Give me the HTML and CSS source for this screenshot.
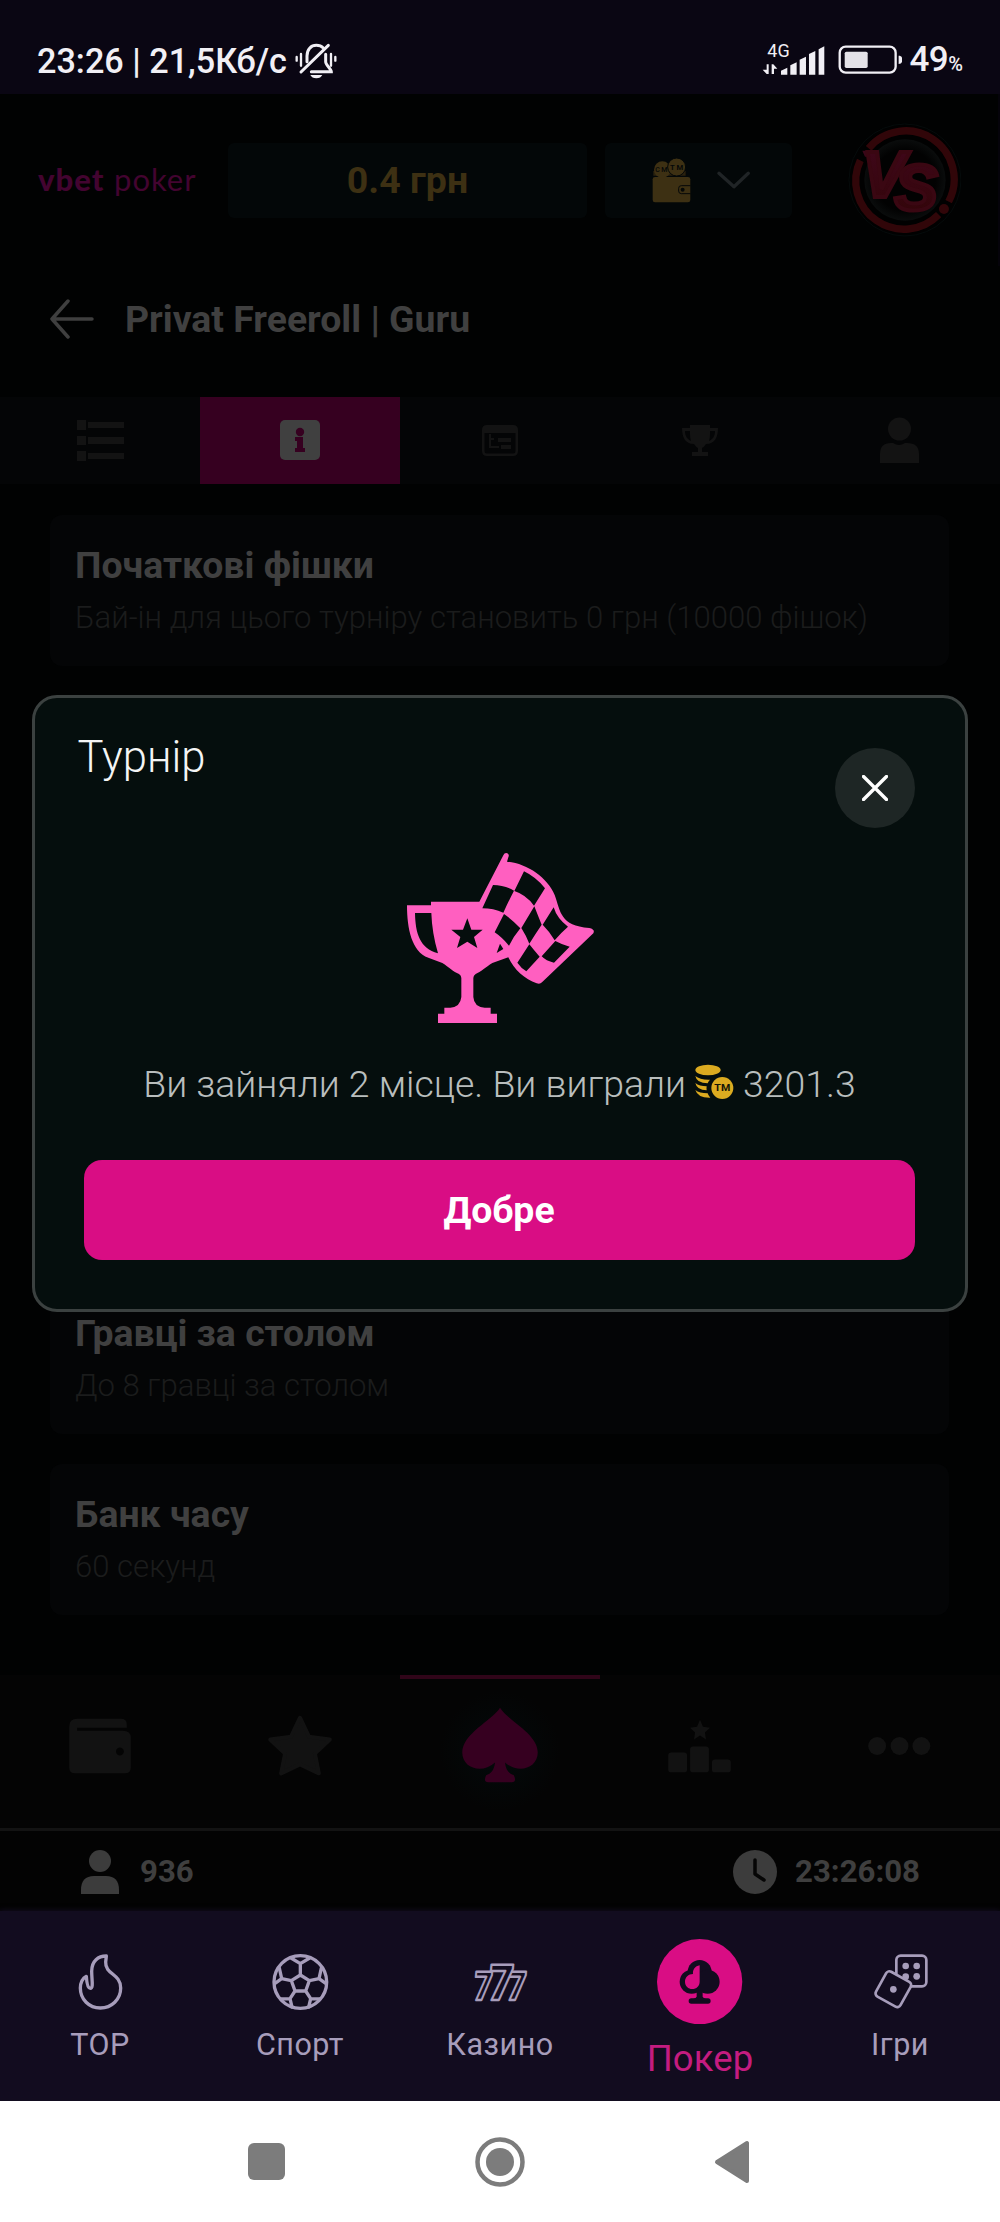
FILE: index.html
```html
<!DOCTYPE html>
<html lang="uk">
<head>
<meta charset="utf-8">
<title>vbet poker</title>
<link rel="stylesheet" href="styles.css">
</head>
<body>
<div class="screen">
  <header class="status">
    <span class="status-text">23:26 | 21,5Кб/с</span>
    <svg class="bell" viewBox="878 120 132 120" fill="none" stroke="#f1eff5" stroke-width="9" stroke-linecap="round">
      <path d="M886 168v11M899 159v35M989 159v35M1002 168v11" stroke-width="7"/>
      <path d="M917 182v-17c0-20 12-32 28-32 9 0 16 3 21 8"/>
      <path d="M973 160v22c0 10 17 22 17 30h-60"/>
      <path d="M981 133L899 213"/>
      <path d="M927 222h36c-3 6-9 10-18 10s-15-4-18-10z" fill="#f1eff5" stroke="none"/>
    </svg>
    <div class="status-right">
      <svg class="signal" viewBox="790 120 190 104" fill="#f1eff5">
        <text x="806" y="169" font-size="55" textLength="67" lengthAdjust="spacingAndGlyphs">4G</text>
        <path d="M804 190h6v29h-6l-12-13h12zM819 219v-29h5l12 13h-10v16z"/>
        <path d="M847 221v-12l19-9v21zM875 221v-28l19-9v37zM903 221v-45l19-9v54zM931 221v-62l19-9v71zM960 221v-76l17-9v85z"/>
      </svg>
      <svg class="battery" viewBox="1015 133 194 88" fill="#f1eff5">
        <rect x="1020" y="138" width="168" height="78" rx="18" fill="none" stroke="#f1eff5" stroke-width="7"/>
        <rect x="1035" y="153" width="69" height="49" rx="5" fill="#e4e2e8"/>
        <path d="M1197 165c7 0 11 3 11 12s-4 13-11 13z"/>
      </svg>
      <span class="percent">49<small>%</small></span>
    </div>
  </header>

  <div class="topbar">
    <div class="logo"><b>vbet</b><span>poker</span></div>
    <div class="balance">0.4 грн</div>
    <div class="wallet-select">
      <svg class="wallet-icon" viewBox="456 470 118 138">
        <path d="M460 526v-14h97v14z" fill="#2a210e"/>
        <circle cx="487" cy="508" r="25" fill="#3d3013"/>
        <circle cx="530" cy="500" r="27" fill="#3d3013" stroke="#030708" stroke-width="3"/>
        <text x="466" y="516" font-size="21" font-weight="500" fill="#050808" textLength="36">CM</text>
        <text x="510" y="508" font-size="23" font-weight="700" fill="#050808" textLength="40">TM</text>
        <rect x="458" y="530" width="113" height="76" rx="7" fill="#3d3013"/>
        <path d="M572 556h-28q-8 0-8 8v8q0 8 8 8h28" fill="none" stroke="#050808" stroke-width="3"/>
        <circle cx="548" cy="568" r="6" fill="#050808"/>
      </svg>
      <svg class="chevron" viewBox="650 518 100 54"><path d="M656 525l45 40 43-40" fill="none" stroke="#202426" stroke-width="10" stroke-linecap="round" stroke-linejoin="round"/></svg>
    </div>
    <svg class="avatar" viewBox="1045 370 340 340">
      <defs>
        <linearGradient id="red" x1="0" y1="0" x2="0" y2="1"><stop offset="0" stop-color="#40071c"/><stop offset="1" stop-color="#310507"/></linearGradient>
        <radialGradient id="disc"><stop offset="0.75" stop-color="#020202"/><stop offset="1" stop-color="#0a0c0c"/></radialGradient>
      </defs>
      <circle cx="1216" cy="541" r="168" fill="#010101" stroke="#071010" stroke-width="2"/>
      <circle cx="1216" cy="541" r="122" fill="url(#disc)"/>
      <g fill="none" stroke="#310609" stroke-width="22">
        <path d="M1107 446A145 145 0 0 1 1347 606"/>
        <path d="M1082 482A145 145 0 0 0 1317 645"/>
      </g>
      <circle cx="1333" cy="628" r="15" fill="#310609"/>
      <path d="M1088 453h42v18h-34z" fill="#3a0719"/>
      <text class="versus" fill="url(#red)"><tspan x="1087" y="592">V</tspan><tspan x="1184" y="632">S</tspan></text>
    </svg>
  </div>

  <div class="page-title">
    <svg class="back" viewBox="0 0 46 40" fill="none" stroke="#3f3f3f" stroke-width="3.5" stroke-linecap="round" stroke-linejoin="round"><path d="M19 2L3 20l16 18M3 20h40"/></svg>
    <h1>Privat Freeroll | Guru</h1>
  </div>

  <nav class="tabs">
    <a><svg viewBox="0 0 200 87"><path d="M77 23h9v10h-9zM88 25h36v6H88zM77 39h9v9h-9zM88 40h36v7H88zM77 54h9v10h-9zM88 56h36v6H88z"/></svg></a>
    <a class="active"><svg viewBox="0 0 200 87"><rect x="80" y="23" width="40" height="40" rx="5" fill="#404040"/><g fill="#360020"><circle cx="100" cy="35" r="4.2"/><path d="M95 40h8v11h2v4H95v-4h2v-7h-2z"/></g></svg></a>
    <a><svg viewBox="0 0 200 87"><path fill-rule="evenodd" d="M87 28h26q5 0 5 5v21q0 5-5 5H87q-5 0-5-5V33q0-5 5-5zM84.500 36v18q0 2.500 2.500 2.500h26q2.500 0 2.500-2.500V36z"/><path d="M89 37h2v4h3v2h-3v6h8v2H89zM98 41h13v4H98zM101 48h10v4h-10z"/></svg></a>
    <a><svg viewBox="0 0 200 87"><path fill-rule="evenodd" d="M90 28h20v3h8c0 9-3 16-12 16q-2 3-4 4v4h6v4H92v-4h6v-4q-2-1-4-4c-9 0-12-7-12-16h8zm-5 6c0 5 2 8 6 10-1-3-1-6-1-10zm30 0h-5c0 4 0 7-1 10 4-2 6-5 6-10z"/></svg></a>
    <a><svg viewBox="0 0 200 87"><circle cx="99.500" cy="32" r="11.500"/><path d="M80 66V57q0-11 11-11h2q6 4 12 0h2q12 0 12 11v9z"/></svg></a>
  </nav>

  <main class="cards">
    <section class="card">
      <h2>Початкові фішки</h2>
      <p>Бай-ін для цього турніру становить 0 грн (10000 фішок)</p>
    </section>
    <section class="card card-lower">
      <h2>Гравці за столом</h2>
      <p>До 8 гравці за столом</p>
    </section>
    <section class="card">
      <h2>Банк часу</h2>
      <p>60 секунд</p>
    </section>
  </main>

  <nav class="poker-nav">
    <a><svg viewBox="0 0 200 154"><path fill-rule="evenodd" d="M77 44h44q6 0 6 6v3H77v3h46q8 0 8 7v30q0 6-6 6H75q-6 0-6-6V52q0-8 8-8zm43 29a4 4 0 1 0 .1 0z"/></svg></a>
    <a><svg viewBox="0 0 200 154"><path stroke="#121212" stroke-width="4" stroke-linejoin="round" d="M100 43l9 19 21 3-15 14 4 20-19-9-19 9 4-20-15-14 21-3z"/></svg></a>
    <a class="active"><svg viewBox="0 0 200 154"><path d="M100 33C92 46 62 59 62 78c0 16 20 22 33 10-1 8-4 11-9 13q-3 7 2 7h24q5 0 2-7c-5-2-8-5-9-13 13 12 33 6 33-10C138 59 108 46 100 33z"/></svg></a>
    <a><svg viewBox="0 0 200 154"><rect x="68" y="78" width="19" height="20" rx="3"/><rect x="90" y="72" width="19" height="26" rx="3"/><rect x="112" y="85" width="19" height="13" rx="3"/><path d="M100 45l3 7 7 1-5 5 1 7-6-4-6 4 1-7-5-5 7-1z"/></svg></a>
    <a><svg viewBox="0 0 200 154"><circle cx="77" cy="71.500" r="9"/><circle cx="99.500" cy="71.500" r="9"/><circle cx="121.500" cy="71.500" r="9"/></svg></a>
  </nav>

  <div class="info-row">
    <svg viewBox="0 0 38 44" width="38" height="44" fill="#3c3c3c"><circle cx="19" cy="11" r="11"/><path d="M0 44v-4Q0 26 13 26h12q13 0 13 14v4z"/></svg>
    <span>936</span>
    <svg class="clock" viewBox="0 0 44 44" width="44" height="44"><circle cx="22" cy="22" r="22" fill="#3c3c3c"/><path d="M22 10v14l9 6" fill="none" stroke="#050505" stroke-width="3.500" stroke-linecap="round" stroke-linejoin="round"/></svg>
    <span>23:26:08</span>
  </div>

  <nav class="main-nav">
    <a>
      <svg viewBox="200 150 200 200"><path d="M318 168c-24 0-44 14-44 46 0 24 6 51-4 51-9 0-11-20-12-36-11 4-18 20-18 35 0 34 26 60 60 60s61-26 61-60c0-44-47-40-45-78z"/></svg>
      <span>TOP</span>
    </a>
    <a>
      <svg viewBox="800 150 200 200" stroke-width="8"><circle cx="900" cy="246" r="79"/><path d="M900 225l27 17-11 31h-32l-11-31zM900 225v-34l-28-17M900 191l28-17M873 242l-29-6-7-32M844 236l-20 14M927 242l29-6 7-32M956 236l20 14M884 273l-15 23-28 1M869 296l6 25M916 273l15 23 28 1M931 296l-6 25"/></svg>
      <span>Спорт</span>
    </a>
    <a>
      <svg class="sevens" viewBox="80 30 200 200">
        <text transform="translate(98 180) skewX(-5)" font-size="119" textLength="54" lengthAdjust="spacingAndGlyphs">7</text>
        <text transform="translate(198 180) skewX(-5)" font-size="119" textLength="56" lengthAdjust="spacingAndGlyphs">7</text>
        <text transform="translate(141 180) skewX(-5)" font-size="149" textLength="74" lengthAdjust="spacingAndGlyphs">7</text>
      </svg>
      <span>Казино</span>
    </a>
    <a class="active">
      <svg viewBox="472 117 256 256" stroke="none"><circle cx="600" cy="245" r="128" fill="#d90d84"/><g fill="#120c1f"><circle cx="600" cy="216" r="36"/><circle cx="576" cy="245" r="36"/><circle cx="624" cy="245" r="36"/><path d="M591 270h18v20q2 5 10 5h6q8 0 8 8t-8 8h-50q-8 0-8-8t8-8h6q8 0 10-5z"/></g><path fill="#d90d84" d="M600 196c-14 2-21 13-20 26-14 0-24 10-24 23s10 22 22 22 22-9 22-22z"/></svg>
      <span>Покер</span>
    </a>
    <a>
      <svg viewBox="1100 150 200 200"><g stroke-width="8"><rect x="1188" y="167" width="90" height="92" rx="13"/><g fill="#a79dbb" stroke="none"><circle cx="1216" cy="198" r="10"/><circle cx="1249" cy="198" r="10"/><circle cx="1216" cy="230" r="10"/><circle cx="1249" cy="229" r="10"/></g><rect x="1137" y="225" width="84" height="85" rx="11" transform="rotate(29 1179 267.500)" fill="#120c1f"/><circle cx="1179" cy="268" r="10" fill="#a79dbb" stroke="none"/></g></svg>
      <span>Ігри</span>
    </a>
  </nav>

  <footer class="system-nav">
    <svg viewBox="0 0 37 37" width="37" height="37"><rect width="37" height="37" rx="6"/></svg>
    <svg viewBox="0 0 50 50" width="50" height="50"><circle cx="25" cy="25" r="22.500" fill="none" stroke="#7c7c7c" stroke-width="4.500"/><circle cx="25" cy="25" r="14"/></svg>
    <svg viewBox="0 0 36 44" width="36" height="44"><path stroke="#7c7c7c" stroke-width="4" stroke-linejoin="round" d="M3 22L33 3v38z"/></svg>
  </footer>

  <div class="modal">
    <div class="modal-head">
      <h3>Турнір</h3>
      <button class="close"><svg viewBox="0 0 26 26" width="26" height="26"><path d="M1.500 1.500l23 23M24.500 1.500l-23 23" stroke="#fff" stroke-width="3.400" stroke-linecap="round"/></svg></button>
    </div>
    <svg class="trophy" viewBox="0 0 720 630" fill="#ff5fc0">
      <path d="M81 226h72v-11h145L370 76q4-9 12-6 7 4 3 12l-4 13c60 5 122 48 143 100 18 50 16 92 104 99q18 4 12 16L486 457q-6 7-16 3c-35-13-68-40-85-78l-48 17c-20 12-35 27-50 33q-7 4-7 12v57q2 30 34 32h18v18h19v28H174v-28h19v-18h18q30-2 33-32v-57q0-8-7-12c-17-6-30-21-50-33l-42-16c-50-17-64-90-64-156z"/>
      <g fill="#050e0d">
        <path d="M105 249h49q2 60 20 121c-55-14-68-62-69-121z"/>
        <path d="M262 265l12 34h34l-26 22 10 33-30-19-31 19 10-33-27-22h35z"/>
        <path d="M339 165q34 0 63 17-16 31-32 66-30-13-63-13zM432 124q36 17 63 51l-33 52q-24-33-59-44zM372 252q26 18 49 43-20 24-34 52-22-26-43-40zM463 229q10 26 22 55-17 25-37 57-10-25-24-47zM521 232q10 34 43 58-20 17-40 41-14-25-36-47zM526 333q20 11 43 17l-47 48q-24-5-37-19zM448 343q14 18 31 37l-40 44q-16-10-27-26zM360 341l10 16-20 12z"/>
      </g>
    </svg>
    <p class="message">
      <span>Ви зайняли 2 місце. Ви виграли</span>
      <svg class="coins" viewBox="44 36 120 112">
        <g fill="#dcab20"><ellipse cx="86" cy="57" rx="38" ry="16"/><path d="M48 75q14 12 44 11-5 5-7 11-33 0-37-22zM48 96q12 10 34 10-1 6 0 12-30-1-34-22zM48 117q12 10 37 10 2 7 8 13-38 1-45-23z"/><circle cx="129" cy="111" r="33"/></g>
        <text x="105" y="121" font-size="28" font-weight="700" fill="#151507" textLength="48" lengthAdjust="spacingAndGlyphs">TM</text>
      </svg>
      <span>3201.3</span>
    </p>
    <button class="ok">Добре</button>
  </div>
</div>
</body>
</html>
```
FILE: styles.css
```css
* { box-sizing: border-box; }
body { margin: 0; background: #000; font-family: Roboto, "Liberation Sans", sans-serif; }
h1, h2, h3, p { margin: 0; }
button { border: 0; padding: 0; font-family: inherit; }
svg { display: block; flex: none; }

.screen { position: relative; width: 1000px; height: 2222px; display: flex; flex-direction: column; background: #010202; overflow: hidden; }

.status { height: 94px; flex: none; padding: 28px 37px 0 37px; display: flex; align-items: center; background: #0a0613; color: #f1eff5; }
.status-text { font-size: 34.200px; font-weight: 500; line-height: 40px; white-space: nowrap; }
.bell { width: 44px; height: 40px; margin-left: 7px; }
.status-right { margin-left: auto; display: flex; align-items: center; }
.signal { width: 63.300px; height: 34.700px; margin: 0 12px 5px 0; }
.battery { width: 64.700px; height: 29.300px; margin: 0 7px 3px 0; }
.percent { font-size: 35px; font-weight: 500; line-height: 40px; letter-spacing: -0.500px; padding-top: 2px; }
.percent small { font-size: 20px; letter-spacing: 0; }

.topbar { height: 172px; flex: none; padding-left: 38px; display: flex; align-items: center; border-right: 2px solid #05030a; }
.logo { width: 190px; display: flex; align-items: baseline; font-family: Lato, sans-serif; font-size: 31px; line-height: 34px; padding-bottom: 3px; color: #430430; }
.logo b { font-weight: 900; width: 76px; letter-spacing: 1px; }
.logo span { font-weight: 400; letter-spacing: 1px; }
.balance { width: 359px; height: 75px; border-radius: 6px; background: #030708; color: #3d3013; font-size: 37.500px; font-weight: 700; line-height: 75px; text-align: center; }
.wallet-select { width: 187px; height: 75px; margin-left: 18px; border-radius: 6px; background: #030708; display: flex; align-items: center; padding-left: 47px; gap: 26px; }
.wallet-icon { width: 39.300px; height: 46px; }
.chevron { width: 33.300px; height: 18px; }
.avatar { width: 113.300px; height: 113.300px; margin-left: 56px; }
.versus { font-family: "Liberation Sans", sans-serif; font-size: 196px; font-weight: 700; font-style: italic; stroke: #3a0712; stroke-width: 12px; }

.page-title { height: 131px; flex: none; padding: 0 0 25px 49px; display: flex; align-items: center; gap: 30px; }
.back { width: 46px; height: 40px; }
.page-title h1 { font-size: 37.400px; font-weight: 700; line-height: 48px; color: #404040; white-space: nowrap; }

.tabs { height: 87px; flex: none; display: flex; background: #040506; }
.tabs a, .poker-nav a { width: 200px; }
.tabs svg { width: 200px; height: 87px; fill: #131313; }
.tabs .active { background: #360020; }

.cards { flex: none; height: 1191px; padding: 31px 51px 0 50px; }
.card { height: 151px; margin-bottom: 30px; padding: 26px 25px; border-radius: 12px; background: #040506; }
.card-lower { margin-top: 617px; }
.card h2 { font-size: 37.400px; line-height: 48px; font-weight: 700; color: #404040; white-space: nowrap; }
.card p { margin-top: 5px; font-size: 31.100px; line-height: 48px; font-weight: 300; color: #1b1c1c; white-space: nowrap; }

.poker-nav { height: 156px; flex: none; display: flex; background: #040404; border-bottom: 3px solid #131313; }
.poker-nav svg { width: 200px; height: 153px; fill: #121212; }
.poker-nav .active { border-top: 4px solid #300519; background: radial-gradient(circle 60px at 100px 72px, #030a0b, #040404); }
.poker-nav .active svg { fill: #360020; margin-top: -4px; }

.info-row { height: 80px; flex: none; padding: 2px 80px 0 81px; display: flex; align-items: center; background: #030303; color: #3f3f3f; font-size: 31.200px; font-weight: 700; }
.info-row span { margin-left: 21px; line-height: 40px; }
.info-row .clock { margin-left: auto; }
.info-row .clock + span { margin-left: 18px; }

.main-nav { height: 190px; flex: none; display: flex; background: #120c1f; box-shadow: 0 -1px 5px #120c1f; color: #a79dbb; }
.main-nav a { width: 200px; padding-top: 39px; display: flex; flex-direction: column; align-items: center; }
.main-nav svg { width: 66.700px; height: 66.700px; fill: none; stroke: #a79dbb; stroke-width: 10; stroke-linejoin: round; stroke-linecap: round; }
.main-nav span { margin-top: 10px; font-size: 30.500px; line-height: 36px; letter-spacing: 0.500px; }
.main-nav .active { padding-top: 28px; }
.main-nav .active svg { width: 85.300px; height: 85.300px; stroke: none; }
.main-nav .active span { margin-top: 15px; font-size: 36.500px; line-height: 40px; letter-spacing: 0.100px; color: #c41c80; }
.sevens { overflow: visible; }
.sevens text { font-family: Roboto, sans-serif; font-weight: 900; fill: #120c1f; stroke-width: 7.500px; }

.system-nav { flex: 1; background: #fff; display: flex; align-items: center; padding-left: 248px; gap: 190px; }
.system-nav svg { fill: #7c7c7c; }
.system-nav svg:last-child { margin-left: -1px; }

.modal { position: absolute; left: 31.500px; top: 695px; width: 936px; height: 617px; padding-top: 34px; border: 3px solid #3b4140; border-radius: 25px; background: #050e0d; }
.modal-head { display: flex; justify-content: space-between; align-items: flex-start; padding: 0 50px 0 43px; }
.modal-head h3 { font-size: 43.600px; line-height: 52px; font-weight: 300; color: #f4f5f5; }
.close { width: 80px; height: 80px; margin-top: 16px; border-radius: 50%; background: #1e2625; display: flex; align-items: center; justify-content: center; }
.trophy { width: 240px; height: 210px; margin: 2px 0 0 345px; }
.message { display: flex; justify-content: center; align-items: center; height: 48px; margin-top: 20px; font-size: 37.400px; font-weight: 300; line-height: 48px; color: #b9bebd; white-space: nowrap; }
.coins { width: 40px; height: 37.300px; margin: 0 9px 5px 8px; }
.ok { display: block; width: 831px; height: 100px; margin: 52px 0 0 49px; border-radius: 18px; background: #d90d84; color: #fff; font-size: 37.400px; font-weight: 700; line-height: 98px; text-align: center; }
```
